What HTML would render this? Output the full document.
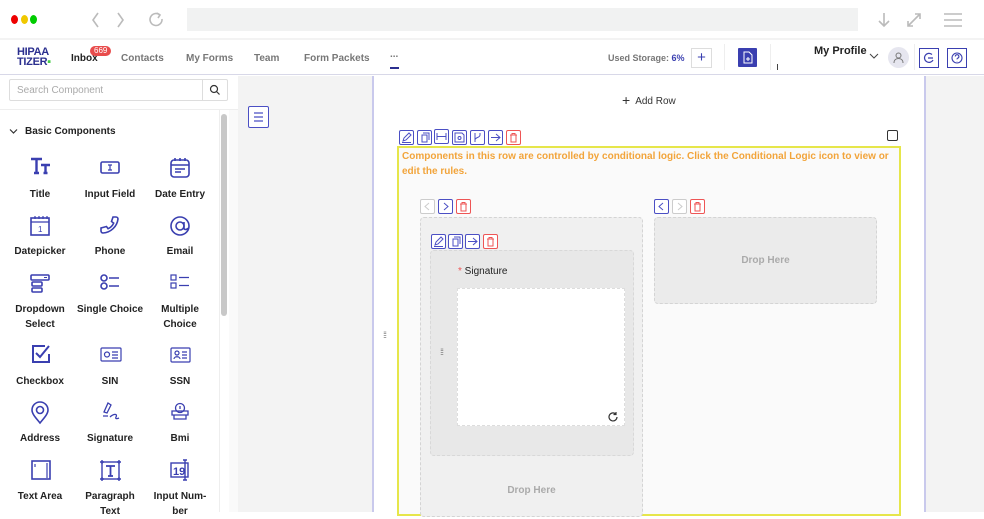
<!DOCTYPE html><html><head><meta charset="utf-8"><style>
*{box-sizing:border-box;margin:0;padding:0}
body{width:984px;height:512px;overflow:hidden;position:relative;font-family:"Liberation Sans",sans-serif;background:#fff;color:#222}
.a{position:absolute}
.nav{font-size:10px;font-weight:bold;color:#777;top:52px}
.tb{position:absolute;width:15px;height:15px;border:1px solid #4b4fc4;border-radius:2px;background:#fff}
.tb.r{border-color:#e55}
.tb.g{border-color:#ccc}
.tb svg{position:absolute;left:1px;top:1px}
.lbl{position:absolute;width:70px;text-align:center;font-size:10px;font-weight:bold;color:#222;line-height:15px}
.ic{position:absolute}
</style></head><body>
<!-- chrome -->
<div class="a" style="left:0;top:0;width:984px;height:40px;background:#fff;border-bottom:2px solid #f3f3f3"></div>
<div class="a" style="left:11px;top:15px;width:7px;height:9px;border-radius:50%;background:#e00"></div>
<div class="a" style="left:21px;top:15px;width:7px;height:9px;border-radius:50%;background:#f0c800"></div>
<div class="a" style="left:30px;top:15px;width:7px;height:9px;border-radius:50%;background:#0c0"></div>
<svg class="a" style="left:88px;top:10px" width="80" height="20" fill="none" stroke="#bbb" stroke-width="1.6"><path d="M10 3 5 10l5 7M30 3l5 7-5 7"/><path d="M72 5a6 6 0 1 0 2 4M69 3l3 2-2 3"/></svg>
<div class="a" style="left:187px;top:8px;width:671px;height:23px;background:#f1f2f2"></div>
<svg class="a" style="left:872px;top:10px" width="100" height="20" fill="none" stroke="#bbb" stroke-width="1.6"><path d="M12 3v13M7 11l5 5 5-5"/><path d="M36 16l12-12M43 4h5v5M36 11v5h5"/><path d="M72 4h18M72 10h18M72 16h18"/></svg>
<!-- nav -->
<div class="a" style="left:0;top:41px;width:984px;height:34px;border-bottom:1px solid #d8d8e8;background:#fff"></div>
<div class="a" style="left:17px;top:47px;font-size:11px;font-weight:900;color:#2b2f8f;line-height:10px;letter-spacing:-0.3px">HIPAA<br>TIZER<span style="color:#4c4">▪</span></div>
<div class="a nav" style="left:71px;color:#222;top:53px">Inbox</div>
<div class="a" style="left:90px;top:46px;background:#e84c4c;color:#fff;font-size:8px;border-radius:6px;padding:0 4px;line-height:10px">669</div>
<div class="a nav" style="left:121px;top:53px">Contacts</div>
<div class="a nav" style="left:186px;top:53px">My Forms</div>
<div class="a nav" style="left:254px;top:53px">Team</div>
<div class="a nav" style="left:304px;top:53px">Form Packets</div>
<div class="a nav" style="left:390px;top:49px">...</div>
<div class="a" style="left:390px;top:67px;width:9px;height:2px;background:#2b2f8f"></div>
<div class="a" style="left:608px;top:53px;font-size:9px;font-weight:bold;color:#777">Used Storage: <span style="color:#3a3fb0">6%</span></div>
<div class="a" style="left:691px;top:48px;width:21px;height:20px;border:1px solid #ddd;text-align:center;font-size:15px;line-height:17px;color:#3a3fb0">+</div>
<div class="a" style="left:724px;top:44px;width:1px;height:26px;background:#eee"></div>
<div class="a" style="left:738px;top:48px;width:19px;height:19px;background:#3a3fb0;border-radius:1px"></div>
<svg class="a" style="left:742px;top:51px" width="11" height="13" fill="none" stroke="#fff" stroke-width="1"><path d="M2 1h5l3 3v8H2zM6 6v4M4 8h4"/></svg>
<div class="a" style="left:770px;top:44px;width:1px;height:26px;background:#eee"></div>
<div class="a" style="left:777px;top:64px;width:1px;height:6px;background:#444"></div>
<div class="a" style="left:814px;top:45px;font-size:11px;font-weight:bold;color:#222">My Profile</div>
<svg class="a" style="left:869px;top:53px" width="10" height="7" fill="none" stroke="#444"><path d="M1 1l4 4 4-4"/></svg>
<div class="a" style="left:888px;top:47px;width:21px;height:21px;border-radius:50%;background:#e6e6ef"></div>
<svg class="a" style="left:892px;top:51px" width="13" height="13" fill="none" stroke="#777"><circle cx="6.5" cy="4.5" r="2.5"/><path d="M2 12c0-3 2-4.5 4.5-4.5S11 9 11 12"/></svg>
<div class="a" style="left:914px;top:44px;width:1px;height:26px;background:#eee"></div>
<div class="a" style="left:919px;top:48px;width:20px;height:20px;border:1px solid #3a3fb0"></div>
<svg class="a" style="left:922px;top:51px" width="14" height="14" fill="none" stroke="#3a3fb0" stroke-width="1.2"><path d="M10 3.5A4.5 4.5 0 1 0 11 9M6 7h5"/></svg>
<div class="a" style="left:947px;top:48px;width:20px;height:20px;border:1px solid #3a3fb0"></div>
<svg class="a" style="left:950px;top:51px" width="14" height="14" fill="none" stroke="#3a3fb0" stroke-width="1.1"><circle cx="7" cy="7" r="5"/><path d="M5.3 5.5a1.8 1.8 0 1 1 2.3 1.7c-.5.2-.6.6-.6 1.2M7 10v.3"/></svg>
<!-- sidebar -->
<div class="a" style="left:9px;top:79px;width:219px;height:22px;border:1px solid #ddd;border-radius:2px"></div>
<div class="a" style="left:202px;top:79px;width:1px;height:22px;background:#ddd"></div>
<div class="a" style="left:17px;top:85px;font-size:10px;color:#aaa">Search Component</div>
<svg class="a" style="left:209px;top:84px" width="12" height="12" fill="none" stroke="#333" stroke-width="1.2"><circle cx="5" cy="5" r="3.5"/><path d="M7.5 7.5l3 3"/></svg>
<div class="a" style="left:0;top:109px;width:238px;height:1px;background:#eee"></div>
<svg class="a" style="left:9px;top:128px" width="9" height="7" fill="none" stroke="#333" stroke-width="1.2"><path d="M1 1.5l3.5 3.5 3.5-3.5"/></svg>
<div class="a" style="left:25px;top:126px;font-size:10px;font-weight:bold;color:#222">Basic Components</div>
<div class="a" style="left:219px;top:110px;width:1px;height:402px;background:#eee"></div>
<div class="a" style="left:221px;top:114px;width:6px;height:202px;border-radius:3px;background:#c8c8c8"></div>
<div class="a" style="left:229px;top:110px;width:9px;height:402px;background:#fafafa"></div>
<!-- icons -->
<svg class="ic" style="left:0;top:150px" width="220" height="362" fill="none" stroke="#3a3fb0" stroke-width="1.6">
<g transform="translate(30,8)"><path d="M1 1h11M6.5 1v14M4 15h5M11 7h9M15.5 7v8M13.5 15h4" stroke-width="2.4"/></g>
<g transform="translate(100,11)"><rect x="1" y="1" width="18" height="11" rx="1.5"/><path d="M8 4h4M10 4v5M8 9h4" stroke-width="1.2"/></g>
<g transform="translate(170,8)"><rect x="1" y="2" width="18" height="17" rx="3"/><path d="M1 7h18M5 0v3M10 0v3M15 0v3M5 11h10M5 14h6"/></g>
<g transform="translate(31,66)"><rect x="0" y="2" width="18" height="17"/><path d="M0 6h18M4 0v3M8 0v3M12 0v3M16 0v3" stroke-width="1.2"/><text x="7" y="16" font-size="8" fill="#3a3fb0" stroke="none" font-family="Liberation Sans">1</text></g>
<g transform="translate(120,66) scale(-1,1)"><path d="M4 1h3l1.5 4.5-2.2 1.6a11 11 0 0 0 5.6 5.6l1.6-2.2L19 12v3a2 2 0 0 1-2 2A16 16 0 0 1 2 3a2 2 0 0 1 2-2z"/></g>
<g transform="translate(170,66)"><circle cx="10" cy="10" r="9"/><circle cx="10" cy="10" r="4"/><path d="M14 6v6c0 2 3 2 4 0"/></g>
<g transform="translate(30,124)"><rect x="1" y="1" width="18" height="5" rx="1"/><rect x="2" y="8" width="10" height="4" rx="1"/><rect x="2" y="14" width="10" height="4" rx="1"/><path d="M14 3.5h3" stroke-width="1"/></g>
<g transform="translate(100,124)"><circle cx="4" cy="4" r="3"/><circle cx="4" cy="12" r="3"/><path d="M9 4h10M9 12h10"/></g>
<g transform="translate(170,124)" stroke-width="1.2"><rect x="1" y="1" width="5" height="5"/><rect x="1" y="9" width="5" height="5"/><path d="M9 3.5h10M9 11.5h10"/></g>
<g transform="translate(31,194)"><path d="M14 2H2v16h16v-8" stroke-width="2"/><path d="M5 9l4 4 9-11" stroke-width="2"/></g>
<g transform="translate(100,197)" stroke-width="1.2"><rect x="1" y="1" width="20" height="13" rx="1"/><circle cx="7" cy="7.5" r="2.5"/><path d="M12 5h6M12 8h6M12 11h6"/></g>
<g transform="translate(170,197)" stroke-width="1.2"><rect x="1" y="1" width="19" height="14" rx="1"/><circle cx="7" cy="6" r="2"/><path d="M4 12c0-3 6-3 6 0M12 5h5M12 8h5M12 11h5"/></g>
<g transform="translate(30,252)"><path d="M10 21c-4-5-8-9-8-13a8 8 0 0 1 16 0c0 4-4 8-8 13z"/><circle cx="10" cy="8" r="3.5"/></g>
<g transform="translate(100,252)" stroke-width="1.3"><path d="M8 1l3 2-4 8-3-1zM3 14h5M10 15c3-3 8-4 6 0-1 2 1 2 3 1"/></g>
<g transform="translate(170,252)" stroke-width="1.3"><circle cx="10" cy="6" r="4.5"/><path d="M10 4v3M2 9h16v4H2zM4 13v4h12v-4"/></g>
<g transform="translate(31,310)" stroke-width="1.6"><rect x="1" y="1" width="18" height="18"/><path d="M4 4v3M16 3v15" stroke-width="1.2"/></g>
<g transform="translate(100,310)" stroke-width="1.4"><rect x="2" y="2" width="17" height="17"/><path d="M6 6h9M10.5 6v10M8 16h5" stroke-width="1.8"/><path d="M0 2h4M2 0v4M17 2h4M19 0v4M0 19h4M2 17v4M17 19h4M19 17v4" stroke-width="1.4"/></g>
<g transform="translate(170,310)" stroke-width="1.4"><rect x="1" y="3" width="17" height="14"/><path d="M15 0v20M13 0h4M13 20h4"/><text x="3" y="15" font-size="11" font-weight="bold" fill="#3a3fb0" stroke="none" font-family="Liberation Sans">19</text></g>
</svg>
<div class="lbl" style="left:5px;top:187px">Title</div>
<div class="lbl" style="left:75px;top:187px">Input Field</div>
<div class="lbl" style="left:145px;top:187px">Date Entry</div>
<div class="lbl" style="left:5px;top:244px">Datepicker</div>
<div class="lbl" style="left:75px;top:244px">Phone</div>
<div class="lbl" style="left:145px;top:244px">Email</div>
<div class="lbl" style="left:5px;top:302px">Dropdown<br>Select</div>
<div class="lbl" style="left:72px;top:302px;width:76px">Single Choice</div>
<div class="lbl" style="left:145px;top:302px">Multiple<br>Choice</div>
<div class="lbl" style="left:5px;top:374px">Checkbox</div>
<div class="lbl" style="left:75px;top:374px">SIN</div>
<div class="lbl" style="left:145px;top:374px">SSN</div>
<div class="lbl" style="left:5px;top:431px">Address</div>
<div class="lbl" style="left:75px;top:431px">Signature</div>
<div class="lbl" style="left:145px;top:431px">Bmi</div>
<div class="lbl" style="left:5px;top:489px">Text Area</div>
<div class="lbl" style="left:75px;top:489px">Paragraph<br>Text</div>
<div class="lbl" style="left:145px;top:489px">Input Num-<br>ber</div>
<!-- canvas -->
<div class="a" style="left:238px;top:76px;width:746px;height:436px;background:#f3f3f3"></div>
<div class="a" style="left:248px;top:106px;width:21px;height:22px;border:1px solid #4b4fc4;border-radius:2px;background:#fff"></div>
<svg class="a" style="left:252px;top:111px" width="13" height="12" stroke="#4b4fc4" stroke-width="1.2"><path d="M2 2h9M2 6h9M2 10h9"/></svg>
<div class="a" style="left:372px;top:76px;width:554px;height:436px;background:#fff;border-left:2px solid #c9c9ec;border-right:2px solid #c9c9ec"></div>
<div class="a" style="left:622px;top:92px;font-size:10px;color:#333"><span style="font-size:14px;vertical-align:-1px">+</span>&nbsp; Add Row</div>
<div class="a" style="left:383px;top:330px;font-size:9px;color:#777;letter-spacing:-1px">⁞⁞</div>
<div class="a" style="left:887px;top:130px;width:11px;height:11px;border:1px solid #333;border-radius:2px"></div>
<!-- row toolbar -->
<div class="tb" style="left:399px;top:130px"><svg width="11" height="11" fill="none" stroke="#4b4fc4"><path d="M2 9l1-3 5-5 2 2-5 5zM1 10.5h9"/></svg></div>
<div class="tb" style="left:417px;top:130px"><svg width="11" height="11" fill="none" stroke="#4b4fc4"><path d="M3 3h5v7H3zM4 1h6v7"/></svg></div>
<div class="tb" style="left:434px;top:129px"><svg width="11" height="11" fill="none" stroke="#4b4fc4"><path d="M1 2v7M10 2v7M1 5.5h9"/></svg></div>
<div class="tb" style="left:452px;top:130px"><svg width="11" height="11" fill="none" stroke="#4b4fc4"><path d="M1 1h7l2 2v7H1z"/><circle cx="5.5" cy="6" r="1.5"/></svg></div>
<div class="tb" style="left:470px;top:130px"><svg width="11" height="11" fill="none" stroke="#4b4fc4"><path d="M3 1v9M8 1v2c0 3-5 2-5 5"/></svg></div>
<div class="tb" style="left:488px;top:130px"><svg width="11" height="11" fill="none" stroke="#4b4fc4"><path d="M1 5.5h9M6 2l4 3.5L6 9"/></svg></div>
<div class="tb r" style="left:506px;top:130px"><svg width="11" height="11" fill="none" stroke="#e55"><path d="M2 3h7M4 3V1.5h3V3M3 3v7h5V3"/></svg></div>
<!-- row -->
<div class="a" style="left:397px;top:146px;width:504px;height:370px;border:2px solid #e6e64a;background:#fafafa"></div>
<div class="a" style="left:402px;top:149px;width:495px;font-size:10px;font-weight:bold;color:#f2a43a;line-height:15px">Components in this row are controlled by conditional logic. Click the Conditional Logic icon to view or edit the rules.</div>
<div class="tb g" style="left:420px;top:199px"><svg width="11" height="11" fill="none" stroke="#ccc"><path d="M7 2L3 5.5 7 9"/></svg></div>
<div class="tb" style="left:438px;top:199px"><svg width="11" height="11" fill="none" stroke="#4b4fc4"><path d="M4 2l4 3.5L4 9"/></svg></div>
<div class="tb r" style="left:456px;top:199px"><svg width="11" height="11" fill="none" stroke="#e55"><path d="M2 3h7M4 3V1.5h3V3M3 3v7h5V3"/></svg></div>
<div class="tb" style="left:654px;top:199px"><svg width="11" height="11" fill="none" stroke="#4b4fc4"><path d="M7 2L3 5.5 7 9"/></svg></div>
<div class="tb g" style="left:672px;top:199px"><svg width="11" height="11" fill="none" stroke="#ccc"><path d="M4 2l4 3.5L4 9"/></svg></div>
<div class="tb r" style="left:690px;top:199px"><svg width="11" height="11" fill="none" stroke="#e55"><path d="M2 3h7M4 3V1.5h3V3M3 3v7h5V3"/></svg></div>
<div class="a" style="left:420px;top:217px;width:223px;height:300px;border:1px dashed #d4d4d4;border-radius:4px;background:#f0f0f0"></div>
<div class="a" style="left:654px;top:217px;width:223px;height:87px;border:1px dashed #d4d4d4;border-radius:4px;background:#ebebeb"></div>
<div class="a" style="left:654px;top:255px;width:223px;text-align:center;font-size:10px;font-weight:bold;color:#aaa">Drop Here</div>
<div class="tb" style="left:431px;top:234px"><svg width="11" height="11" fill="none" stroke="#4b4fc4"><path d="M2 9l1-3 5-5 2 2-5 5zM1 10.5h9"/></svg></div>
<div class="tb" style="left:448px;top:234px"><svg width="11" height="11" fill="none" stroke="#4b4fc4"><path d="M3 3h5v7H3zM4 1h6v7"/></svg></div>
<div class="tb" style="left:465px;top:234px"><svg width="11" height="11" fill="none" stroke="#4b4fc4"><path d="M1 5.5h9M6 2l4 3.5L6 9"/></svg></div>
<div class="tb r" style="left:483px;top:234px"><svg width="11" height="11" fill="none" stroke="#e55"><path d="M2 3h7M4 3V1.5h3V3M3 3v7h5V3"/></svg></div>
<div class="a" style="left:430px;top:250px;width:204px;height:206px;border:1px dashed #d8d8d8;border-radius:4px;background:#e8e8e8"></div>
<div class="a" style="left:458px;top:266px;font-size:10px;color:#222"><span style="color:#e55">*</span> Signature</div>
<div class="a" style="left:440px;top:347px;font-size:9px;color:#777;letter-spacing:-1px">⁞⁞</div>
<div class="a" style="left:457px;top:288px;width:168px;height:138px;background:#fff;border:1px dashed #ddd"></div>
<svg class="a" style="left:607px;top:411px" width="12" height="12" fill="none" stroke="#333" stroke-width="1.2"><path d="M10 6a4 4 0 1 1-1.5-3.2M9 1v2.5H6.5"/></svg>
<div class="a" style="left:420px;top:485px;width:223px;text-align:center;font-size:10px;font-weight:bold;color:#aaa">Drop Here</div>
<div class="a" style="left:926px;top:76px;width:58px;height:436px;background:#f3f3f3"></div>
</body></html>
